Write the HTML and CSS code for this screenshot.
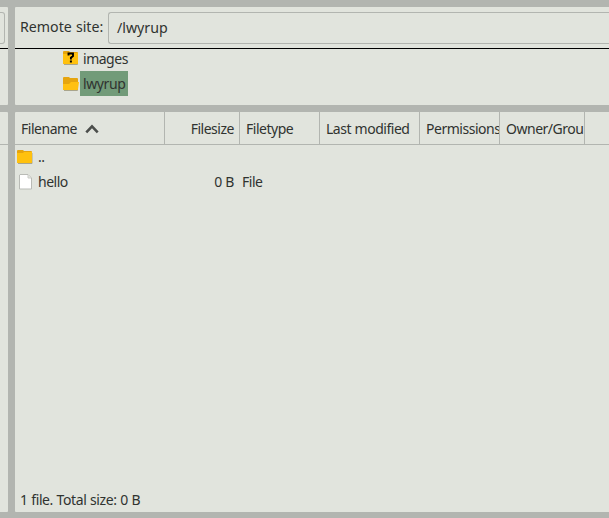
FILE: index.html
```html
<!DOCTYPE html>
<html lang="en">
<head>
<meta charset="utf-8">
<title>Remote site</title>
<link rel="stylesheet" href="styles.css">
</head>
<body>
<div class="window">
  <aside class="local">
    <section class="pane tree-pane"><div class="site-bar"><div class="edge-button"></div></div></section>
    <section class="pane list-pane"><div class="header"></div></section>
  </aside>
  <main class="remote">
    <section class="pane tree-pane">
      <div class="site-bar"><span class="site-label">Remote site:</span><div class="path">/lwyrup</div></div>
      <ul class="tree">
        <li>
          <svg class="icon" viewBox="0 0 16 16"><path d="M1 14.5h13.500V4" fill="none" stroke="#a9a58c"/><path d="M0 2q0-1 1-1h5l1 1h7q1 0 1 1v10q0 1-1 1H1q-1 0-1-1z" fill="#e6a40d"/><path d="M0 4h6l1-1h8v10q0 1-1 1H1q-1 0-1-1z" fill="#ffc10e"/><path d="M5.500 5.500V3.500h4.500v2.500L7.900 7.800v1.700M6.900 11.500h2" fill="none" stroke="#000" stroke-width="1.900"/></svg>
          <span class="name">images</span>
        </li>
        <li>
          <svg class="icon" viewBox="0 0 16 16"><path d="M1 14.500h13.500V3" fill="none" stroke="#a9a58c"/><path d="M0 2q0-1 1-1h5l1 1h7q1 0 1 1v10q0 1-1 1H1q-1 0-1-1z" fill="#e6a50f"/><path d="M0 8h6l2-2h8l-1 7q0 1-1 1H1q-1 0-1-1z" fill="#ffc011"/></svg>
          <span class="name selected">lwyrup</span>
        </li>
      </ul>
    </section>
    <section class="pane list-pane">
      <div class="header">
        <div class="col">Filename<svg class="sort" viewBox="0 0 14 10"><path d="M1.300 8.300 7 2.300l5.700 6" fill="none" stroke="#4b4e4b" stroke-width="2.600"/></svg></div>
        <div class="col right">Filesize</div>
        <div class="col">Filetype</div>
        <div class="col">Last modified</div>
        <div class="col">Permissions</div>
        <div class="col">Owner/Group</div>
      </div>
      <div class="row">
        <div class="cell file"><svg class="icon" viewBox="0 0 16 16"><path d="M1 14.500h14V4" fill="none" stroke="#a9a58c"/><path d="M0 2q0-1 1-1h5l1 1h7q1 0 1 1v10q0 1-1 1H1q-1 0-1-1z" fill="#e6a40d"/><path d="M0 4h6l1-1h8v10q0 1-1 1H1q-1 0-1-1z" fill="#ffc10e"/></svg>..</div>
      </div>
      <div class="row">
        <div class="cell file"><svg class="icon" viewBox="0 0 16 16"><path d="M3 .5h8L14.500 4v11H2.500V1z" fill="#fff" stroke="#b9bbb6"/><path d="M11 1v3h3" fill="#e6e7e4" stroke="#c9cbc6"/></svg>hello</div>
        <div class="cell size">0 B</div>
        <div class="cell">File</div>
      </div>
      <footer class="status">1 file. Total size: 0 B</footer>
    </section>
  </main>
</div>
</body>
</html>
```
FILE: styles.css
```css
* { box-sizing: border-box; }
body { margin: 0; background: #b2b5b0; color: #303330; font: 14px/20px "Noto Sans", sans-serif; letter-spacing: -0.48px; word-spacing: 0.4px; overflow: hidden; }
.window { display: grid; grid-template-columns: 8px 594px; gap: 7px; height: 518px; padding: 7px 0 6px; }
.local, .remote { display: grid; grid-template-rows: 98px 400px; gap: 7px; min-width: 0; }
.pane { background: #e1e4dd; overflow: hidden; min-width: 0; }
.local .pane { border-radius: 0 1px 1px 0; }
.remote .pane { border-radius: 1px 0 0 1px; }
.site-bar { display: flex; align-items: center; height: 42px; border-bottom: 1px solid #000; }
.edge-button { width: 5px; height: 32px; border: 1px solid #b2b5b0; border-left: 0; border-radius: 0 3px 3px 0; }
.site-label { width: 93px; padding: 0 0 1px 5px; font-size: 14.2px; letter-spacing: 0; white-space: nowrap; }
.path { flex: 1; height: 32px; padding-left: 8px; border: 1px solid #b2b5b0; border-right: 0; border-radius: 3px 0 0 3px; font-size: 14.2px; letter-spacing: 0; line-height: 30px; }
.tree { margin: 0; padding: 0 0 0 48px; list-style: none; }
.tree li { display: flex; align-items: center; height: 25px; }
.tree li:first-child { margin-top: -3px; }
.icon { width: 16px; height: 16px; flex: none; }
.tree .icon { margin-top: 1px; }
.tree li:first-child .icon { margin: 0 0 1px; }
.name { height: 25px; margin-left: 1px; padding: 0 3px; line-height: 25px; }
.selected { width: 48px; background: #729b79; letter-spacing: -0.38px; }
.list-pane { display: flex; flex-direction: column; }
.header { display: grid; grid-template-columns: 150px 75px 80px 100px 80px 85px; height: 33px; border-bottom: 1px solid #b2b5b0; flex: none; }
.col { padding-left: 6px; border-right: 1px solid #b2b5b0; line-height: 34px; overflow: hidden; white-space: nowrap; }
.right { padding-right: 5px; text-align: right; }
.sort { width: 14px; height: 10px; margin-left: 8px; }
.row { display: grid; grid-template-columns: 150px 75px 80px; height: 25px; line-height: 23px; }
.file { display: flex; align-items: center; gap: 5px; height: 24px; padding-left: 2px; line-height: 24px; }
.size { padding-right: 6px; text-align: right; }
.row .cell:last-child:not(.file) { padding-left: 2px; }
.status { margin-top: auto; height: 25px; padding-left: 5px; line-height: 25px; letter-spacing: -0.4px; }
```
